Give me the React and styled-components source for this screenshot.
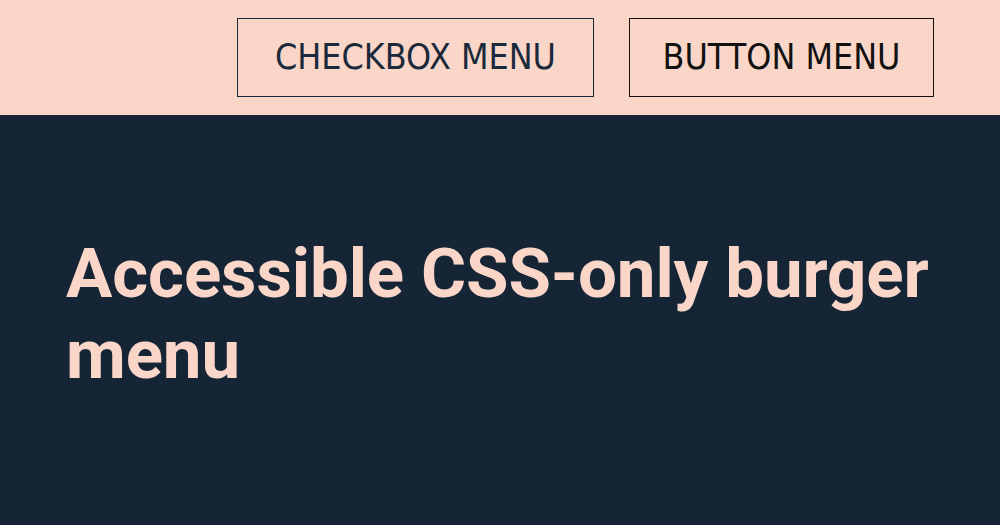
import React from "react";
import styled, { createGlobalStyle } from "styled-components";

const GlobalStyle = createGlobalStyle`
  html, body {
    margin: 0;
    padding: 0;
    background: #152536;
  }
  * {
    box-sizing: border-box;
  }
`;

const Page = styled.div`
  width: 1000px;
  height: 525px;
  display: flex;
  flex-direction: column;
  background: #152536;
  overflow: hidden;
`;

const TopBar = styled.nav`
  height: 115px;
  flex-shrink: 0;
  display: flex;
  justify-content: flex-end;
  align-items: flex-start;
  gap: 35px;
  padding: 18px 66px 0 0;
  background: #fad6c8;
`;

const MenuButton = styled.button`
  width: ${props => props.$width}px;
  height: 79px;
  padding: 0 0 2px;
  display: flex;
  align-items: center;
  justify-content: center;
  background: transparent;
  border: 1.5px solid ${props => props.$ink};
  color: ${props => props.$ink};
  font-family: "DejaVu Sans Condensed", "DejaVu Sans", sans-serif;
  font-size: 35.5px;
  font-weight: 400;
  white-space: nowrap;
  cursor: pointer;
`;

const Hero = styled.main`
  flex: 1;
  padding: 118px 66px 0;
`;

const Heading = styled.h1`
  margin: 0;
  max-width: 880px;
  font-family: Roboto, "Liberation Sans", sans-serif;
  font-weight: 700;
  font-size: 69px;
  line-height: 81px;
  letter-spacing: -0.1px;
  color: #fad6c8;
`;

export default function App() {
  return (
    <>
      <GlobalStyle />
      <Page>
        <TopBar>
          <MenuButton $ink="#1b2a3b" $width={357}>CHECKBOX MENU</MenuButton>
          <MenuButton $ink="#111111" $width={305}>BUTTON MENU</MenuButton>
        </TopBar>
        <Hero>
          <Heading>Accessible CSS-only burger menu</Heading>
        </Hero>
      </Page>
    </>
  );
}
